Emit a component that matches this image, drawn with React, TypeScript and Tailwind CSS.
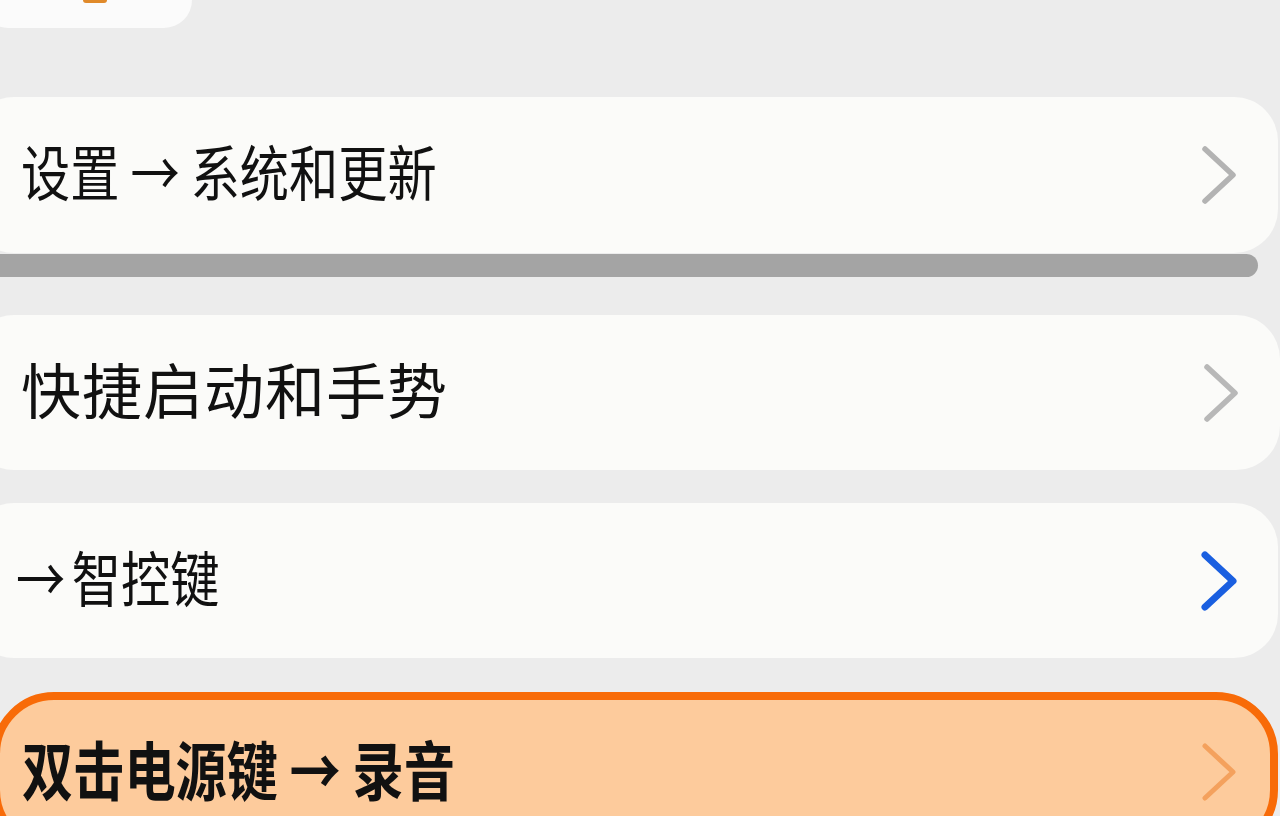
import React from "react";

const font = {
  fontFamily: '"Noto Sans CJK SC", "Noto Sans", sans-serif',
};

function Chevron({ color, width = 5 }: { color: string; width?: number }) {
  return (
    <svg width="40" height="64" viewBox="0 0 40 64" className="shrink-0">
      <polyline
        points="6,6 34,32 6,58"
        fill="none"
        stroke={color}
        strokeWidth={width}
        strokeLinecap="round"
        strokeLinejoin="round"
      />
    </svg>
  );
}

export default function App() {
  return (
    <div
      className="h-[816px] w-[1280px] overflow-hidden bg-[#ececec] text-[#111111]"
      style={font}
    >
      {/* partial card at the very top */}
      <div className="-ml-[20px] flex h-[28px] w-[212px] justify-start rounded-b-[30px] bg-[#fbfbfb] pl-[103px]">
        <div className="h-[3px] w-[24px] rounded-b-[3px] bg-[#e08a2a]" />
      </div>

      {/* system & update row */}
      <div className="-ml-[30px] mt-[69px] flex h-[156px] w-[1308px] items-center justify-between rounded-[44px] bg-[#fbfbf9] pl-[51px] pr-[39px]">
        <span className="mb-[10px] inline-block origin-left scale-x-[0.82] whitespace-nowrap text-[60px] leading-none">
          设置 → 系统和更新
        </span>
        <Chevron color="#b3b3b3" width={5.5} />
      </div>
      <div className="mt-[1px] h-[23px] w-[1258px] rounded-r-[12px] bg-[#a4a4a4]" />

      {/* gestures row */}
      <div className="-ml-[30px] mt-[38px] flex h-[155px] w-[1310px] items-center justify-between rounded-[44px] bg-[#fbfbf9] pl-[51px] pr-[39px]">
        <span className="mb-[10px] whitespace-nowrap text-[60px] leading-none tracking-[1px]">
          快捷启动和手势
        </span>
        <Chevron color="#b8b8b8" width={5.5} />
      </div>

      {/* smart key row */}
      <div className="-ml-[30px] mt-[33px] flex h-[155px] w-[1308px] items-center justify-between rounded-[44px] bg-[#fbfbf9] pl-[46px] pr-[39px]">
        <span className="mb-[9px] inline-block origin-left scale-x-[0.82] whitespace-nowrap text-[60px] leading-none">
          →<span className="ml-[8px]">智控键</span>
        </span>
        <Chevron color="#1a5fe0" width={7} />
      </div>

      {/* highlighted row */}
      <div className="-ml-[8px] mt-[34px] flex h-[160px] w-[1286px] items-center justify-between rounded-[62px] border-[8px] border-[#f86b08] bg-[#fdcb9c] pl-[22px] pr-[31px]">
        <span className="mb-[10px] inline-block origin-left scale-x-[0.8] whitespace-nowrap text-[64px] font-bold leading-none">
          双击电源键 → 录音
        </span>
        <Chevron color="#f4a15d" width={5} />
      </div>
    </div>
  );
}
